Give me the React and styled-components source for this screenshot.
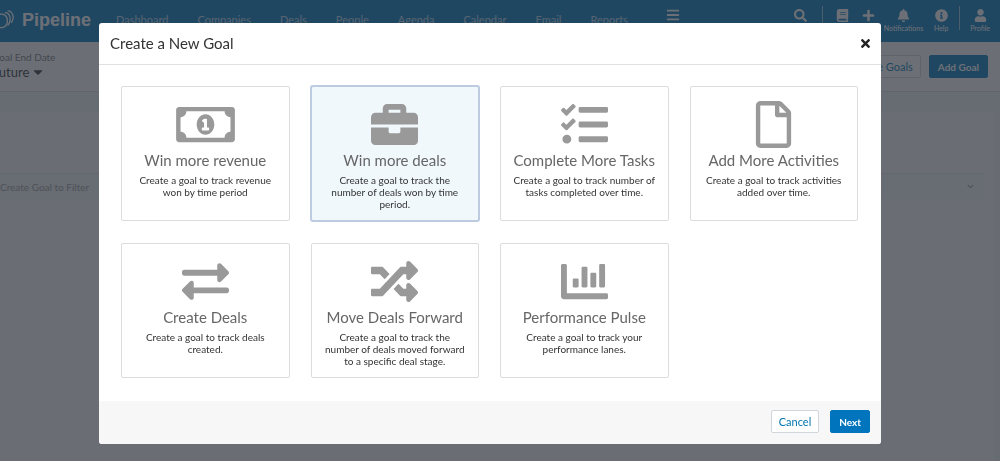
import { useState } from 'react'
import styled, { createGlobalStyle } from 'styled-components'
import {
  FaBars, FaSearch, FaBook, FaPlus, FaBell, FaInfoCircle, FaUser, FaTimes, FaCaretDown, FaChevronDown,
  FaRegMoneyBillAlt, FaBriefcase, FaTasks, FaRegFile, FaExchangeAlt, FaRandom, FaChartBar,
} from 'react-icons/fa'

const navLinks = ['Dashboard', 'Companies', 'Deals', 'People', 'Agenda', 'Calendar', 'Email', 'Reports']

const goals = [
  { id: 'revenue', icon: FaRegMoneyBillAlt, title: 'Win more revenue', text: 'Create a goal to track revenue won by time period' },
  { id: 'deals', icon: FaBriefcase, title: 'Win more deals', text: 'Create a goal to track the number of deals won by time period.' },
  { id: 'tasks', icon: FaTasks, title: 'Complete More Tasks', text: 'Create a goal to track number of tasks completed over time.' },
  { id: 'activities', icon: FaRegFile, title: 'Add More Activities', text: 'Create a goal to track activities added over time.' },
  { id: 'create', icon: FaExchangeAlt, title: 'Create Deals', text: 'Create a goal to track deals created.' },
  { id: 'move', icon: FaRandom, title: 'Move Deals Forward', text: 'Create a goal to track the number of deals moved forward to a specific deal stage.' },
  { id: 'pulse', icon: FaChartBar, title: 'Performance Pulse', text: 'Create a goal to track your performance lanes.' },
]

const App = () => {
  const [selected, setSelected] = useState('deals')

  return (
    <>
      <GlobalStyle />
      <Page>
        <TopBar>
          <Logo href="#">
            <LogoMark viewBox="0 0 24 24" aria-hidden="true">
              <path d="M3 9C8 4 14 5 16 9c2 5 0 10-4 11-4 1-8-1-9-4" />
              <path d="M14 4c6 0 8 8 3 14" />
              <path d="M17 2c6 0 8 8 4 13" />
            </LogoMark>
            Pipeline
          </Logo>
          <Nav>
            {navLinks.map((link) => (
              <NavLink key={link} href="#">{link}</NavLink>
            ))}
            <MenuButton aria-label="More"><FaBars size={14} /></MenuButton>
          </Nav>
          <Tools>
            <BarButton aria-label="Search"><FaSearch size={13} /></BarButton>
            <BarDivider $wide />
            <BarButton aria-label="Library"><FaBook size={13} /></BarButton>
            <BarButton aria-label="Add"><FaPlus size={13} /></BarButton>
            <AlertsButton><FaBell size={13} />Notifications</AlertsButton>
            <BarButton><FaInfoCircle size={13} />Help</BarButton>
            <BarDivider />
            <BarButton><FaUser size={13} />Profile</BarButton>
          </Tools>
        </TopBar>
        <FilterBar>
          <Filter>
            <FilterLabel>Goal End Date</FilterLabel>
            <FilterValue>Future <FaCaretDown size={14} /></FilterValue>
          </Filter>
          <Actions>
            <Button>Manage Goals</Button>
            <Button $primary>Add Goal</Button>
          </Actions>
        </FilterBar>
        <Content>
          <Panel>
            <GoalFilter>Create Goal to Filter<FaChevronDown size={7} /></GoalFilter>
          </Panel>
        </Content>
      </Page>

      <Overlay>
        <Modal role="dialog" aria-modal="true" aria-labelledby="goal-title">
          <ModalHeader>
            <ModalTitle id="goal-title">Create a New Goal</ModalTitle>
            <CloseButton aria-label="Close"><FaTimes size={13} /></CloseButton>
          </ModalHeader>
          <GoalGrid>
            {goals.map(({ id, icon: Icon, title, text }) => (
              <GoalCard
                key={id}
                aria-pressed={selected === id}
                $active={selected === id}
                onClick={() => setSelected(id)}
              >
                <Icon />
                <GoalTitle>{title}</GoalTitle>
                <GoalText>{text}</GoalText>
              </GoalCard>
            ))}
          </GoalGrid>
          <ModalFooter>
            <Button>Cancel</Button>
            <Button $primary>Next</Button>
          </ModalFooter>
        </Modal>
      </Overlay>
    </>
  )
}

export default App

const GlobalStyle = createGlobalStyle`
  *, *::before, *::after {
    box-sizing: border-box;
  }
  body {
    margin: 0;
    background: #f7f7f8;
    color: #333;
    font-family: Lato, "Open Sans", sans-serif;
    font-size: 11px;
  }
  button {
    font-family: inherit;
    cursor: pointer;
  }
`

const Page = styled.div`
  display: flex;
  flex-direction: column;
  min-height: 100vh;
  overflow: hidden;
`

const TopBar = styled.header`
  display: flex;
  height: 42px;
  background: #0075bd;
  color: #fff;
`

const Logo = styled.a`
  display: flex;
  align-items: center;
  gap: 8px;
  width: 124px;
  height: 40px;
  margin-left: -8px;
  color: #fff;
  font-family: "Liberation Sans", Arial, sans-serif;
  font-size: 18px;
  font-weight: 700;
  text-decoration: none;
`

const LogoMark = styled.svg`
  width: 22px;
  height: 22px;
  fill: none;
  stroke: currentColor;
  stroke-width: 1.4;
`

const Nav = styled.nav`
  display: flex;
  align-items: center;
  gap: 29px;
  height: 38px;
`

const NavLink = styled.a`
  color: #fff;
  opacity: 0.7;
  font-size: 11px;
  text-decoration: none;
`

const Tools = styled.div`
  display: flex;
  gap: 10px;
  margin-left: auto;
  padding: 6px 10px 0 0;
`

const BarButton = styled.button`
  display: flex;
  flex-direction: column;
  align-items: center;
  gap: 2px;
  min-width: 16px;
  padding: 3px 0 0;
  border: 0;
  background: none;
  color: #fff;
  font-size: 7px;
`

const MenuButton = styled(BarButton)`
  align-self: flex-start;
  margin-left: 8px;
  padding-top: 8px;
`

const AlertsButton = styled(BarButton)`
  margin-left: -3px;
`

const BarDivider = styled.span`
  width: 1px;
  height: 24px;
  margin: ${(props) => (props.$wide ? '0 2px 0 3px' : '0')};
  background: #8fc3e2;
`

const FilterBar = styled.div`
  display: flex;
  justify-content: space-between;
  align-items: center;
  height: 50px;
  padding-right: 12px;
  border-bottom: 1px solid #d5d7da;
  background: #fafafb;
`

const Filter = styled.div`
  display: flex;
  flex-direction: column;
  margin-left: -8px;
  padding-bottom: 4px;
`

const FilterLabel = styled.span`
  color: #777;
  font-size: 10px;
  line-height: 14px;
`

const FilterValue = styled.span`
  display: flex;
  align-items: center;
  gap: 2px;
  font-size: 13px;
  line-height: 16px;
`

const Actions = styled.div`
  display: flex;
  gap: 8px;
`

const Button = styled.button`
  height: 23px;
  padding: 0 ${(props) => (props.$primary ? 8 : 7)}px;
  border: 1px solid ${(props) => (props.$primary ? '#0075bd' : '#d0d6da')};
  border-radius: 2px;
  background: ${(props) => (props.$primary ? '#0075bd' : '#fff')};
  color: ${(props) => (props.$primary ? '#fff' : '#0075ad')};
  font-size: ${(props) => (props.$primary ? 10 : 11)}px;
  font-weight: ${(props) => (props.$primary ? 700 : 400)};
`

const Content = styled.main`
  display: flex;
  flex: 1;
  padding: 20px 6px 0 0;
  background: #edeef0;
`

const Panel = styled.section`
  flex: 1;
  padding: 61px 10px 0 0;
  background: #f7f7f8;
`

const GoalFilter = styled.div`
  display: flex;
  justify-content: space-between;
  align-items: center;
  height: 26px;
  padding-right: 10px;
  border-top: 1px solid #e2e3e5;
  background: #f1f2f3;
  color: #999;
  font-size: 10px;
`

const Overlay = styled.div`
  position: fixed;
  inset: 0;
  padding: 23px 119px 17px 99px;
  background: rgba(45, 51, 60, 0.7);
  overflow: auto;
`

const Modal = styled.div`
  border-radius: 3px;
  background: #fff;
  overflow: hidden;
`

const ModalHeader = styled.div`
  display: flex;
  justify-content: space-between;
  align-items: center;
  height: 42px;
  padding: 0 9px 0 11px;
  border-bottom: 1px solid #dfe1e4;
`

const ModalTitle = styled.h2`
  margin: 0;
  padding-bottom: 2px;
  font-size: 15px;
  font-weight: 400;
`

const CloseButton = styled.button`
  display: flex;
  padding: 0;
  border: 0;
  background: none;
  color: #222;
`

const GoalGrid = styled.div`
  display: grid;
  grid-template-columns: repeat(4, 1fr);
  gap: 22px 21px;
  padding: 21px 23px 23px 22px;
`

const GoalCard = styled.button`
  display: flex;
  flex-direction: column;
  align-items: center;
  min-height: 135px;
  padding: 14px 10px 7px;
  border: 1px solid ${(props) => (props.$active ? '#bccbe0' : '#dcdcdc')};
  border-radius: 2px;
  background: ${(props) => (props.$active ? '#f0f8fc' : '#fff')};
  box-shadow: ${(props) => (props.$active ? '0 0 0 1px #bccbe0' : 'none')};
  color: #999;

  /* wide enough for the bill, the narrower icons centre themselves */
  svg {
    width: 59px;
    height: 47px;
  }
`

const GoalTitle = styled.span`
  margin-top: 2px;
  color: #666;
  font-size: 15px;
  line-height: 20px;
`

const GoalText = styled.span`
  margin-top: 4px;
  color: #333;
  font-size: 10px;
  line-height: 12px;
`

const ModalFooter = styled.div`
  display: flex;
  justify-content: flex-end;
  align-items: center;
  gap: 11px;
  height: 43px;
  padding: 0 11px 2px 0;
  background: #f7f7f7;
`
